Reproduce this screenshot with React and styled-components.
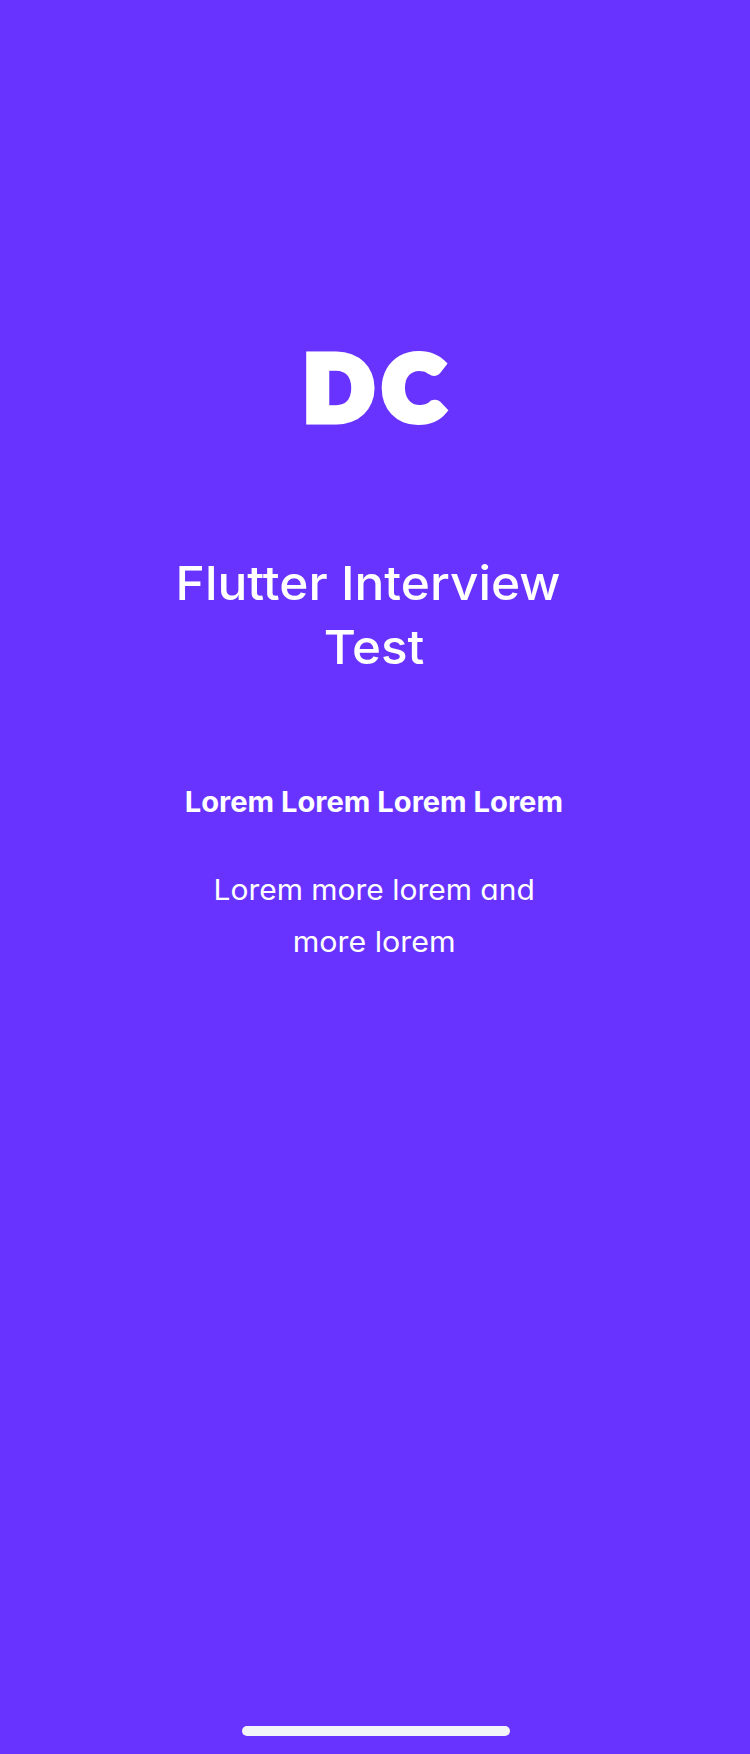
import React from "react";
import styled, { createGlobalStyle } from "styled-components";

const GlobalStyle = createGlobalStyle`
  body { margin: 0; background: #6833ff; }
`;

const Screen = styled.main`
  box-sizing: border-box;
  width: 750px;
  height: 1754px;
  padding: 336px 0 18px;
  display: flex;
  flex-direction: column;
  align-items: center;
  background: #6833ff;
  color: #fff;
  font-family: Inter, "Noto Sans", sans-serif;
  font-feature-settings: "cv11" 1;
  font-variant-ligatures: none;
  text-align: center;
`;

const Logo = styled.div`
  font: 900 88px/100px Lato, sans-serif;
  letter-spacing: 10px;
  padding-left: 7px;
  transform: scaleX(1.03);
  -webkit-text-stroke: 9px #fff;
`;

const Title = styled.h1`
  margin: 115px 0 0;
  font-size: 47px;
  font-weight: 500;
  line-height: 64px;
`;

const Subtitle = styled.h2`
  margin: 102px 0 0;
  font-size: 28px;
  font-weight: 700;
  line-height: 42px;
`;

const Description = styled.p`
  margin: 41px 0 0;
  font-size: 28px;
  font-weight: 400;
  line-height: 52px;
`;

const Line = styled.span`
  display: block;
  margin-right: ${(p) => p.$trailing || 0}px;
  transform: scaleX(${(p) => p.$stretch || 1});
`;

const HomeIndicator = styled.div`
  width: 268px;
  height: 10px;
  margin: auto 0 0 2px;
  border-radius: 5px;
  background: #f3f4f9;
`;

export default function App() {
  return (
    <>
      <GlobalStyle />
      <Screen>
        <Logo>DC</Logo>
        <Title>
          <Line $stretch={1.057} $trailing={13}>Flutter Interview</Line>
          <Line $stretch={1.05} $trailing={1}>Test</Line>
        </Title>
        <Subtitle>
          <Line $stretch={1.04} $trailing={2}>Lorem Lorem Lorem Lorem</Line>
        </Subtitle>
        <Description>
          <Line $stretch={1.07} $trailing={2}>Lorem more lorem and</Line>
          <Line $stretch={1.085} $trailing={2}>more lorem</Line>
        </Description>
        <HomeIndicator />
      </Screen>
    </>
  );
}
